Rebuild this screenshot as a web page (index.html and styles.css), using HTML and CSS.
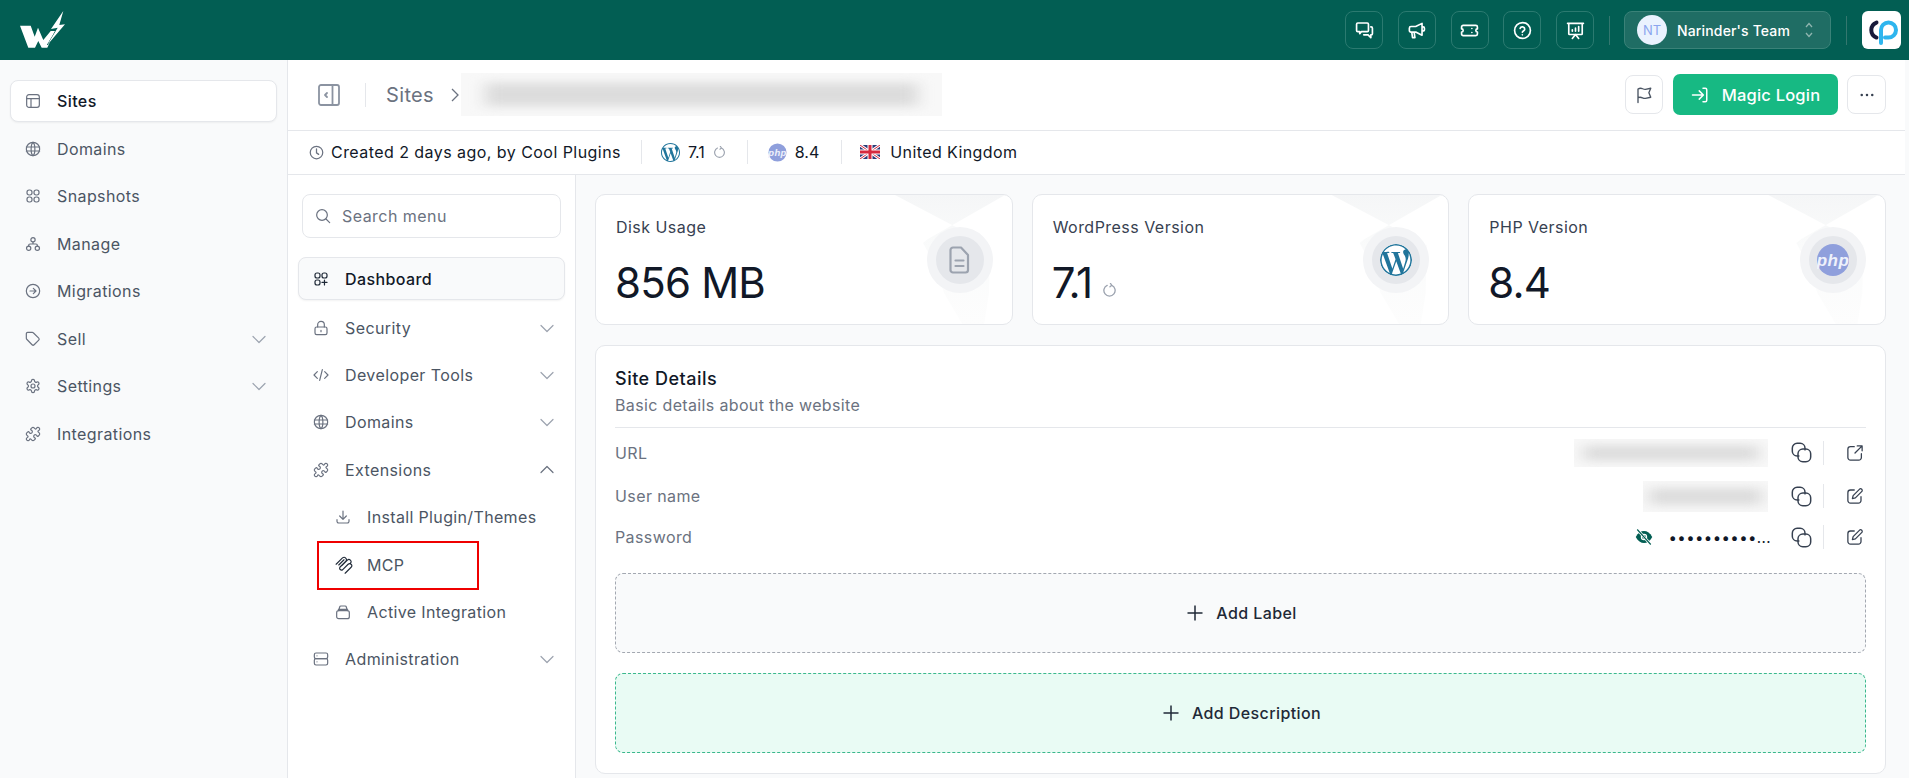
FILE: index.html
```html
<!DOCTYPE html>
<html lang="en">
<head>
<meta charset="utf-8">
<title>Sites</title>
<link rel="stylesheet" href="styles.css">
</head>
<body>
<svg class="defs" xmlns="http://www.w3.org/2000/svg">
  <symbol id="i-layout" viewBox="0 0 24 24"><rect x="2.500" y="2.500" width="19" height="19" rx="3.500"/><path d="M2.500 8.500h19M9 8.500v13"/></symbol>
  <symbol id="i-globe" viewBox="0 0 24 24"><circle cx="12" cy="12" r="10"/><path d="M2 9h20M2 15h20M12 2c3.600 3 3.900 17 0 20M12 2c-3.600 3-3.900 17 0 20"/></symbol>
  <symbol id="i-grid" viewBox="0 0 24 24"><rect x="3" y="3" width="7.500" height="7.500" rx="3.200"/><rect x="13.500" y="3" width="7.500" height="7.500" rx="3.200"/><rect x="3" y="13.500" width="7.500" height="7.500" rx="3.200"/><rect x="13.500" y="13.500" width="7.500" height="7.500" rx="3.200"/></symbol>
  <symbol id="i-tree" viewBox="0 0 24 24"><circle cx="12" cy="5.500" r="3.200"/><circle cx="5.500" cy="18.500" r="3.200"/><circle cx="18.500" cy="18.500" r="3.200"/><path d="M12 8.700V12M5.500 15.300V14a2 2 0 0 1 2-2h9a2 2 0 0 1 2 2v1.300"/></symbol>
  <symbol id="i-migrate" viewBox="0 0 24 24"><circle cx="12" cy="12" r="10"/><path d="M7.500 12h9M12.500 8l4 4-4 4"/></symbol>
  <symbol id="i-tag" viewBox="0 0 24 24"><path d="M11 2H4a2 2 0 0 0-2 2v7a2 2 0 0 0 .6 1.400l8 8.200a2.200 2.200 0 0 0 3.100 0l6.900-6.900a2.200 2.200 0 0 0 0-3.100l-8.200-8A2 2 0 0 0 11 2z"/></symbol>
  <symbol id="i-gear" viewBox="0 0 24 24"><path d="M12.220 2h-.44a2 2 0 0 0-2 2v.18a2 2 0 0 1-1 1.730l-.43.25a2 2 0 0 1-2 0l-.15-.08a2 2 0 0 0-2.730.73l-.22.38a2 2 0 0 0 .73 2.730l.15.1a2 2 0 0 1 1 1.720v.51a2 2 0 0 1-1 1.740l-.15.09a2 2 0 0 0-.73 2.730l.22.38a2 2 0 0 0 2.730.73l.15-.08a2 2 0 0 1 2 0l.43.25a2 2 0 0 1 1 1.730V20a2 2 0 0 0 2 2h.44a2 2 0 0 0 2-2v-.18a2 2 0 0 1 1-1.730l.43-.25a2 2 0 0 1 2 0l.15.08a2 2 0 0 0 2.730-.73l.22-.39a2 2 0 0 0-.73-2.730l-.15-.08a2 2 0 0 1-1-1.740v-.5a2 2 0 0 1 1-1.740l.15-.09a2 2 0 0 0 .73-2.730l-.22-.38a2 2 0 0 0-2.730-.73l-.15.08a2 2 0 0 1-2 0l-.43-.25a2 2 0 0 1-1-1.730V4a2 2 0 0 0-2-2z"/><circle cx="12" cy="12" r="3"/></symbol>
  <symbol id="i-puzzle" viewBox="0 0 24 24"><path d="M19.439 7.850c-.049.322.059.648.289.878l1.568 1.568c.47.47.706 1.087.706 1.704s-.235 1.233-.706 1.704l-1.611 1.611a.98.98 0 0 1-.837.276c-.47-.07-.802-.48-.968-.925a2.501 2.501 0 1 0-3.214 3.214c.446.166.855.497.925.968a.979.979 0 0 1-.276.837l-1.61 1.610a2.404 2.404 0 0 1-1.705.707 2.402 2.402 0 0 1-1.704-.706l-1.568-1.568a1.026 1.026 0 0 0-.877-.29c-.493.074-.84.504-1.020.968a2.500 2.500 0 1 1-3.237-3.237c.464-.18.894-.527.967-1.020a1.026 1.026 0 0 0-.289-.877l-1.568-1.568A2.402 2.402 0 0 1 1.998 12c0-.617.236-1.234.706-1.704L4.230 8.770c.24-.24.581-.353.917-.303.515.077.877.528 1.073 1.010a2.500 2.500 0 1 0 3.259-3.259c-.482-.196-.933-.558-1.010-1.073-.05-.336.062-.676.303-.917l1.525-1.525A2.402 2.402 0 0 1 12 1.998c.617 0 1.234.236 1.704.706l1.568 1.568c.23.23.556.338.877.29.493-.074.84-.504 1.020-.968a2.500 2.500 0 1 1 3.237 3.237c-.464.18-.894.527-.967 1.020Z"/></symbol>
  <symbol id="i-chev" viewBox="0 0 16 16"><path d="M2 5.500l6 6 6-6"/></symbol>
  <symbol id="i-dash" viewBox="0 0 24 24"><rect x="3" y="3" width="7.500" height="7.500" rx="3"/><rect x="13.500" y="3" width="7.500" height="7.500" rx="3"/><rect x="3" y="13.500" width="7.500" height="7.500" rx="3"/><path d="M17.200 13.500v7.500M13.500 17.200H21"/></symbol>
  <symbol id="i-lock" viewBox="0 0 24 24"><rect x="3" y="10.500" width="18" height="11.500" rx="2.500"/><path d="M7 10.500V7a5 5 0 0 1 10 0v3.500M12 15.500v2"/></symbol>
  <symbol id="i-code" viewBox="0 0 24 24"><path d="M6.500 7L1.500 12l5 5M17.500 7l5 5-5 5M14 4l-4 16"/></symbol>
  <symbol id="i-down" viewBox="0 0 24 24"><path d="M12 3v12M7 10.500l5 5 5-5M3 16v2.500A2.500 2.500 0 0 0 5.500 21h13a2.500 2.500 0 0 0 2.500-2.500V16"/></symbol>
  <symbol id="i-mcp" viewBox="0 0 24 24"><path d="M1.500 11L10 2.500a3.200 3.200 0 0 1 4.500 4.500L6.500 15M5 12l7-7M6.500 15a2.600 2.600 0 0 0 3.500 3.500L17.500 11a2.800 2.800 0 0 1 4 4L13.500 23M9.500 12.500l7-7a2.800 2.800 0 0 1 4 4"/></symbol>
  <symbol id="i-stack" viewBox="0 0 24 24"><rect x="2.500" y="10" width="19" height="12" rx="3"/><path d="M5.500 10L7 4.500A2 2 0 0 1 9 3h6a2 2 0 0 1 2 1.500l1.500 5.500M5 8h14"/></symbol>
  <symbol id="i-server" viewBox="0 0 24 24"><rect x="2" y="3" width="20" height="8.500" rx="2.500"/><rect x="2" y="11.500" width="20" height="9.500" rx="2.500"/><path d="M6 7.200h.01M6 16.200h.01"/></symbol>
  <symbol id="i-plus" viewBox="0 0 16 16"><path d="M8 .5v15M.5 8h15"/></symbol>
  <symbol id="i-copy" viewBox="0 0 24 24"><path d="M9 16H7a5.500 5.500 0 0 1-5.500-5.500V7A5.500 5.500 0 0 1 7 1.500h3.500A5.500 5.500 0 0 1 16 7v2"/><rect x="8" y="8" width="14.500" height="14.500" rx="5.500"/></symbol>
  <symbol id="i-ext" viewBox="0 0 24 24"><path d="M11 3.500H6A3.500 3.500 0 0 0 2.500 7v11A3.500 3.500 0 0 0 6 21.500h11a3.500 3.500 0 0 0 3.500-3.500v-5M12 12L21.500 2.500M15 2.500h6.500V9"/></symbol>
  <symbol id="i-edit" viewBox="0 0 24 24"><path d="M11 4H6a3.500 3.500 0 0 0-3.500 3.500V18A3.500 3.500 0 0 0 6 21.500h10.500A3.500 3.500 0 0 0 20 18v-5"/><path d="M18.500 2.500a2.300 2.300 0 0 1 3 3L12.500 14.500 8.500 15.500l1-4z"/></symbol>
  <symbol id="i-wp" viewBox="0 0 24 24"><path fill="#21759b" d="M21.469 6.825c.84 1.537 1.318 3.300 1.318 5.175 0 3.979-2.156 7.456-5.363 9.325l3.295-9.527c.615-1.540.82-2.771.82-3.864 0-.405-.026-.78-.07-1.110m-7.981.105c.647-.03 1.232-.105 1.232-.105.582-.075.514-.93-.067-.899 0 0-1.755.135-2.880.135-1.064 0-2.850-.15-2.850-.15-.585-.03-.661.855-.075.885 0 0 .54.061 1.125.09l1.680 4.605-2.370 7.080L5.354 6.900c.649-.03 1.234-.1 1.234-.1.585-.075.516-.93-.065-.896 0 0-1.746.138-2.874.138-.2 0-.438-.008-.69-.015C4.911 3.150 8.235 1.215 12 1.215c2.809 0 5.365 1.072 7.286 2.833-.046-.003-.091-.009-.141-.009-1.060 0-1.812.923-1.812 1.914 0 .89.513 1.643 1.060 2.531.411.72.89 1.643.89 2.977 0 .915-.354 1.994-.821 3.479l-1.075 3.585-3.900-11.610.001.014zM12 22.784c-1.059 0-2.081-.153-3.048-.437l3.237-9.406 3.315 9.087c.024.053.05.101.078.149-1.120.393-2.325.609-3.582.609M1.211 12c0-1.564.336-3.050.935-4.390L7.290 21.709C3.694 19.960 1.212 16.271 1.211 12M12 0C5.385 0 0 5.385 0 12s5.385 12 12 12 12-5.385 12-12S18.615 0 12 0"/></symbol>
</svg>

<div class="app">
  <header class="topbar">
    <svg class="logo" viewBox="0 0 45 38" aria-hidden="true"><path d="M0 14.700h10.700l4 11 3.300-9 5.300 12.300 7.400-9H35l-7.700 16.700h-5.600L18.300 30 15 36.700H8.300z" fill="#fff"/><path d="M43.300 0L31 18l6.700-1.300L27.300 34 45 13.300l-5.700.7z" fill="#fff" stroke="#025e53" stroke-width="1" paint-order="stroke"/></svg>
    <div class="top-actions">
      <button class="top-btn"><svg viewBox="0 0 24 24"><path d="M2 4a1.500 1.500 0 0 1 1.500-1.500h12A1.500 1.500 0 0 1 17 4v8a1.500 1.500 0 0 1-1.500 1.500H8L6 16v-2.500H3.500A1.500 1.500 0 0 1 2 12z"/><path d="M20 7.500h.5A1.500 1.500 0 0 1 22 9v7a1.500 1.500 0 0 1-1.500 1.500H20V21l-3.500-3.500H11"/></svg></button>
      <button class="top-btn"><svg viewBox="0 0 24 24"><path d="M3 9a2 2 0 0 1 2-2h6l8-4v15l-8-4H5a2 2 0 0 1-2-2zM6 14l1 7h3l-1-7M19 7.500h1.500a1.500 1.500 0 0 1 1.500 1.500v2a1.500 1.500 0 0 1-1.500 1.500H19"/></svg></button>
      <button class="top-btn"><svg viewBox="0 0 24 24"><path d="M2 7.500a2 2 0 0 1 2-2h16a2 2 0 0 1 2 2V10a2 2 0 0 0 0 4v2.500a2 2 0 0 1-2 2H4a2 2 0 0 1-2-2V14a2 2 0 0 0 0-4zM15 9.500v.01M15 14.500v.01"/></svg></button>
      <button class="top-btn"><svg viewBox="0 0 24 24"><circle cx="12" cy="12" r="10"/><path d="M9 9.300a3 3 0 0 1 5.800 1c0 2-3 2.500-3 4M11.800 17.500h.01"/></svg></button>
      <button class="top-btn"><svg viewBox="0 0 24 24"><path d="M2 3h20M3.500 3v13a1 1 0 0 0 1 1h15a1 1 0 0 0 1-1V3M8 22l4-5 4 5M8 13v-2M12 13V9M16 13V7"/></svg></button>
    </div>
    <span class="top-sep first"></span>
    <button class="team">
      <span class="avatar">NT</span>
      <span class="team-name">Narinder's Team</span>
      <svg class="updown" viewBox="0 0 8 16"><path d="M1 5l3-3.500L7 5M1 11l3 3.500L7 11"/></svg>
    </button>
    <span class="top-sep"></span>
    <span class="cp">
      <svg viewBox="0 0 39 38" aria-hidden="true"><path d="M14.500 11.500a8 8 0 0 0 0 15" fill="none" stroke="#17193a" stroke-width="4" stroke-linecap="round"/><path d="M19 32V19a7.500 7.500 0 1 1 7.500 7.500H23" fill="none" stroke="#2eb5ee" stroke-width="4" stroke-linecap="round"/></svg>
    </span>
  </header>

  <div class="body">
    <nav class="side">
      <a class="side-item active"><svg class="ic"><use href="#i-layout"/></svg>Sites</a>
      <a class="side-item"><svg class="ic"><use href="#i-globe"/></svg>Domains</a>
      <a class="side-item"><svg class="ic"><use href="#i-grid"/></svg>Snapshots</a>
      <a class="side-item"><svg class="ic"><use href="#i-tree"/></svg>Manage</a>
      <a class="side-item"><svg class="ic"><use href="#i-migrate"/></svg>Migrations</a>
      <a class="side-item"><svg class="ic"><use href="#i-tag"/></svg>Sell<svg class="chev"><use href="#i-chev"/></svg></a>
      <a class="side-item"><svg class="ic"><use href="#i-gear"/></svg>Settings<svg class="chev"><use href="#i-chev"/></svg></a>
      <a class="side-item"><svg class="ic"><use href="#i-puzzle"/></svg>Integrations</a>
    </nav>

    <main class="main">
      <div class="head">
        <svg class="collapse" viewBox="0 0 22 22"><rect x="1" y="1" width="20" height="20" rx="2"/><path d="M14.500 1v20M9 9l-2 2 2 2"/></svg>
        <span class="head-sep"></span>
        <span class="crumb">Sites</span>
        <svg class="crumb-chev" viewBox="0 0 8 14"><path d="M1 1l6 6-6 6"/></svg>
        <span class="blur blur-title"><i></i></span>
        <div class="head-actions">
          <button class="square flagbtn"><svg viewBox="0 0 24 24"><path d="M4 22V4c5-3 6 1 10 .500L21 3l-2.500 6 2.500 6-7 1.500c-4 .5-5-3-10-1"/></svg></button>
          <button class="magic"><svg viewBox="0 0 24 24"><path d="M2 12h14M11 6.500l5.500 5.500-5.500 5.500M16 3h3a2 2 0 0 1 2 2v14a2 2 0 0 1-2 2h-3"/></svg>Magic Login</button>
          <button class="square dots"><svg viewBox="0 0 24 24"><circle cx="5" cy="12" r="1.700"/><circle cx="12" cy="12" r="1.700"/><circle cx="19" cy="12" r="1.700"/></svg></button>
        </div>
      </div>

      <div class="meta">
        <svg class="clock" viewBox="0 0 24 24"><circle cx="12" cy="12" r="10"/><path d="M12 6v6.500l3.500 2.500"/></svg>
        <span class="meta-created">Created 2 days ago, by Cool Plugins</span>
        <span class="meta-sep"></span>
        <svg class="wp"><use href="#i-wp"/></svg>
        <span class="meta-val">7.1</span>
        <svg class="refresh" viewBox="0 0 16 16"><path d="M10.500 2.500a6 6 0 1 1-5 0M9 .5l1.500 2-2 1.500"/></svg>
        <span class="meta-sep after-wp"></span>
        <svg class="php-small" viewBox="0 0 20 20"><circle cx="10" cy="10" r="9.500" fill="#8f9fdc"/><text x="10" y="13.500" text-anchor="middle">php</text></svg>
        <span class="meta-val">8.4</span>
        <span class="meta-sep after-php"></span>
        <svg class="flag" viewBox="0 0 20 14"><rect width="20" height="14" fill="#2b3a78"/><path d="M0 0l20 14M20 0L0 14" stroke="#fff" stroke-width="3"/><path d="M0 0l20 14M20 0L0 14" stroke="#d6293e" stroke-width="1"/><path d="M10 0v14M0 7h20" stroke="#fff" stroke-width="5"/><path d="M10 0v14M0 7h20" stroke="#d6293e" stroke-width="3"/></svg>
        <span class="meta-country">United Kingdom</span>
      </div>

      <div class="split">
        <nav class="sub">
          <label class="search">
            <svg viewBox="0 0 24 24"><circle cx="10.500" cy="10.500" r="8"/><path d="M16.500 16.500L22 22"/></svg>
            <input type="text" placeholder="Search menu">
          </label>
          <div class="sub-list">
            <a class="sub-item active"><svg class="ic dark"><use href="#i-dash"/></svg>Dashboard</a>
            <a class="sub-item"><svg class="ic"><use href="#i-lock"/></svg>Security<svg class="chev"><use href="#i-chev"/></svg></a>
            <a class="sub-item"><svg class="ic"><use href="#i-code"/></svg>Developer Tools<svg class="chev"><use href="#i-chev"/></svg></a>
            <a class="sub-item"><svg class="ic"><use href="#i-globe"/></svg>Domains<svg class="chev"><use href="#i-chev"/></svg></a>
            <a class="sub-item"><svg class="ic"><use href="#i-puzzle"/></svg>Extensions<svg class="chev up"><use href="#i-chev"/></svg></a>
            <a class="sub-item child"><svg class="ic"><use href="#i-down"/></svg>Install Plugin/Themes</a>
            <a class="sub-item child marked"><svg class="ic dark mcp"><use href="#i-mcp"/></svg>MCP<span class="redbox"></span></a>
            <a class="sub-item child"><svg class="ic"><use href="#i-stack"/></svg>Active Integration</a>
            <a class="sub-item"><svg class="ic"><use href="#i-server"/></svg>Administration<svg class="chev"><use href="#i-chev"/></svg></a>
          </div>
        </nav>

        <section class="content">
          <div class="cards">
            <article class="card">
              <span class="deco"></span>
              <div class="card-label">Disk Usage</div>
              <div class="card-value">856 MB</div>
              <span class="ring"><span class="ring-in"><svg class="file" viewBox="0 0 20 28"><path d="M3.500 1.500h8L18.500 9v15a2.500 2.500 0 0 1-2.500 2.500H3.500A2.500 2.500 0 0 1 1 24V4a2.500 2.500 0 0 1 2.500-2.500zM6 14.500h8M6 20h8"/></svg></span></span>
            </article>
            <article class="card">
              <span class="deco"></span>
              <div class="card-label">WordPress Version</div>
              <div class="card-value"><span class="num"><span class="kern">7</span>.1</span><svg class="refresh big" viewBox="0 0 16 16"><path d="M10.500 2.500a6 6 0 1 1-5 0M9 .5l1.500 2-2 1.500"/></svg></div>
              <span class="ring"><span class="ring-in"><svg class="wp big"><use href="#i-wp"/></svg></span></span>
            </article>
            <article class="card">
              <span class="deco"></span>
              <div class="card-label">PHP Version</div>
              <div class="card-value">8.4</div>
              <span class="ring"><span class="ring-in"><svg class="php-big" viewBox="0 0 32 32"><circle cx="16" cy="16" r="16" fill="#8f9fdc"/><text x="16" y="21.500" text-anchor="middle">php</text></svg></span></span>
            </article>
          </div>

          <article class="details">
            <h2>Site Details</h2>
            <p>Basic details about the website</p>
            <div class="rows">
              <div class="row r1">
                <span class="row-label">URL</span>
                <span class="blur blur-url"><i></i></span>
                <svg class="act copy"><use href="#i-copy"/></svg><span class="act-sep"></span><svg class="act ext"><use href="#i-ext"/></svg>
              </div>
              <div class="row r2">
                <span class="row-label">User name</span>
                <span class="blur blur-user"><i></i></span>
                <svg class="act copy"><use href="#i-copy"/></svg><span class="act-sep"></span><svg class="act edit"><use href="#i-edit"/></svg>
              </div>
              <div class="row r3">
                <span class="row-label">Password</span>
                <svg class="eye" viewBox="0 0 24 24"><path d="M1 12c3-5.500 6.800-8 11-8s8 2.500 11 8c-3 5.500-6.800 8-11 8s-8-2.500-11-8z" fill="#025e53"/><circle cx="12" cy="12" r="3.500" fill="none" stroke="#fff" stroke-width="1.500"/><path d="M3 2l18 20" stroke="#fff" stroke-width="3.500"/><path d="M3 2l18 20" stroke="#025e53" stroke-width="1.500"/></svg>
                <span class="pass">••••••••••...</span>
                <svg class="act copy"><use href="#i-copy"/></svg><span class="act-sep"></span><svg class="act edit"><use href="#i-edit"/></svg>
              </div>
            </div>
            <button class="add"><svg class="plus"><use href="#i-plus"/></svg>Add Label</button>
            <button class="add green"><svg class="plus"><use href="#i-plus"/></svg>Add Description</button>
          </article>
        </section>
      </div>
    </main>
    <div class="rail"></div>
  </div>
</div>
</body>
</html>
```

FILE: styles.css
```css
* { box-sizing: border-box; }
html, body { margin: 0; height: 100%; }
body { font-family: Inter, "Liberation Sans", sans-serif; font-size: 16px; letter-spacing: .4px; color: #111827; background: #fff; overflow: hidden; }
button { font-family: inherit; cursor: pointer; }
.defs { display: none; }
.app { height: 778px; display: flex; flex-direction: column; }

/* top bar */
.topbar { height: 60px; flex: none; background: #025e53; display: flex; align-items: center; padding: 0 8px 0 20px; }
.logo { width: 45px; height: 38px; margin-top: -1px; }
.top-actions { margin-left: auto; display: flex; gap: 14.750px; }
.top-btn { width: 38px; height: 38px; padding: 0; border: 1px solid #2b7a70; border-radius: 8px; background: transparent; display: flex; align-items: center; justify-content: center; }
.top-btn svg { width: 19px; height: 19px; fill: none; stroke: #fff; stroke-width: 2.100; stroke-linecap: round; stroke-linejoin: round; }
.top-sep { width: 1px; height: 29px; background: #34776f; margin: 0 15px; }
.top-sep.first { margin: 0 14px 0 15px; }
.team { width: 207px; height: 38px; border: 1px solid #3a8278; border-radius: 8px; background: #1f6d64; color: #fff; display: flex; align-items: center; padding: 0 12px; }
.avatar { width: 30px; height: 30px; border-radius: 50%; background: #eaf2fe; color: #8aa5ee; font-size: 13px; display: flex; align-items: center; justify-content: center; flex: none; }
.team-name { margin-left: 10px; font-size: 14px; font-weight: 500; letter-spacing: .15px; }
.updown { width: 8px; height: 16px; margin-left: 15px; fill: none; stroke: #8fb5af; stroke-width: 1.300; }
.cp { width: 39px; height: 38px; border-radius: 6px; background: #fff; display: block; }
.cp svg { width: 39px; height: 38px; display: block; }

/* layout */
.body { flex: 1; min-height: 0; display: flex; }
.side { width: 288px; flex: none; background: #f9fafb; border-right: 1px solid #e5e7eb; padding: 20px 10px 0; display: flex; flex-direction: column; gap: 5.570px; }
.main { flex: 1; min-width: 0; display: flex; flex-direction: column; }
.rail { width: 4px; flex: none; background: #f9fafb; }

.ic { width: 16px; height: 16px; flex: none; fill: none; stroke: #6b7280; stroke-width: 1.800; stroke-linecap: round; stroke-linejoin: round; }
.ic.dark { stroke: #1f2937; }
.chev { width: 16px; height: 16px; flex: none; margin-left: auto; fill: none; stroke: #9ca3af; stroke-width: 1.200; stroke-linecap: round; stroke-linejoin: round; }
.chev.up { transform: rotate(180deg); stroke: #6b7280; }

.side-item { height: 42px; display: flex; align-items: center; gap: 16px; padding: 0 9px 0 14px; color: #4b5563; border: 1px solid transparent; border-radius: 8px; }
.side-item.active { background: #fff; border-color: #e5e7eb; color: #111827; font-weight: 500; box-shadow: 0 1px 2px rgba(0,0,0,.05); }

/* head */
.head { height: 71px; flex: none; border-bottom: 1px solid #e5e7eb; display: flex; align-items: center; padding: 0 19px 1px 30px; }
.collapse { width: 22px; height: 22px; flex: none; fill: none; stroke: #8b93a1; stroke-width: 1.800; stroke-linejoin: round; stroke-linecap: round; }
.head-sep { width: 1px; height: 24px; background: #e5e7eb; margin: 0 20px 0 25px; }
.crumb { font-size: 20px; color: #6b7280; letter-spacing: .35px; }
.crumb-chev { width: 8px; height: 14px; margin-left: 17px; fill: none; stroke: #6b7280; stroke-width: 1.300; }
.blur { display: block; overflow: hidden; background: #f8f8f8; flex: none; position: relative; }
.blur i { display: block; height: 100%; background: #dcdcdc; filter: blur(9px); transform: scale(.9, .55); }
.blur-title { width: 481px; height: 43px; margin-left: 2px; }
.head-actions { margin-left: auto; display: flex; align-items: center; gap: 10px; }
.square { width: 39px; height: 39px; padding: 0; border: 1px solid #e5e7eb; border-radius: 8px; background: #fff; display: flex; align-items: center; justify-content: center; }
.square.flagbtn { width: 38px; }
.square svg { width: 18px; height: 18px; fill: none; stroke: #4b5563; stroke-width: 1.800; stroke-linejoin: round; stroke-linecap: round; }
.square.dots svg { fill: #374151; stroke: none; }
.magic { width: 165px; height: 41px; border: 0; border-radius: 7px; background: #17b983; color: #fff; font-size: 16.500px; font-weight: 500; letter-spacing: .2px; display: flex; align-items: center; justify-content: center; gap: 13px; padding: 0; margin-right: -1px; }
.magic svg { width: 18px; height: 18px; fill: none; stroke: #fff; stroke-width: 2; stroke-linecap: round; stroke-linejoin: round; }

/* meta */
.meta { height: 44px; flex: none; border-bottom: 1px solid #e5e7eb; display: flex; align-items: center; padding: 0 0 1px 21px; color: #111827; }
.clock { width: 15px; height: 15px; flex: none; fill: none; stroke: #6b7280; stroke-width: 2; stroke-linecap: round; }
.meta-created { margin-left: 7px; letter-spacing: .45px; }
.meta-sep { width: 1px; height: 24px; background: #e5e7eb; margin: 0 19px 0 20px; }
.meta-sep.after-wp { margin: 0 20px 0 21px; }
.meta-sep.after-php { margin: 0 18px 0 22px; }
.wp { width: 19px; height: 19px; flex: none; }
.meta-val { margin-left: 8px; letter-spacing: 0; }
.refresh { width: 13px; height: 13px; margin-left: 8px; flex: none; fill: none; stroke: #9ca3af; stroke-width: 1.400; stroke-linecap: round; stroke-linejoin: round; }
.php-small { width: 19px; height: 19px; flex: none; }
.php-small text { font: italic 700 10px "Liberation Sans", sans-serif; fill: #eef1fb; }
.flag { width: 20px; height: 14px; flex: none; }
.meta-country { margin-left: 10px; }

/* split */
.split { flex: 1; min-height: 0; display: flex; }
.sub { width: 288px; flex: none; border-right: 1px solid #e5e7eb; padding: 19px 10px 0; }
.search { height: 44px; margin: 0 4px 0 4px; border: 1px solid #e5e7eb; border-radius: 8px; display: flex; align-items: center; padding: 0 12px; gap: 11px; background: #fff; }
.search svg { width: 16px; height: 16px; flex: none; fill: none; stroke: #6b7280; stroke-width: 1.800; stroke-linecap: round; }
.search input { border: 0; outline: 0; padding: 0; flex: 1; min-width: 0; font: 16px Inter, sans-serif; letter-spacing: .45px; color: #111827; background: transparent; }
.search input::placeholder { color: #6b7280; opacity: 1; }
.sub-list { margin-top: 20px; display: flex; flex-direction: column; gap: 5.400px; width: 267px; }
.sub-item { height: 42px; display: flex; align-items: center; gap: 16px; padding: 0 9px 0 14px; color: #4b5563; border: 1px solid transparent; border-radius: 8px; }
.sub-item.active { background: #f9fafb; border-color: #e5e7eb; color: #111827; font-weight: 500; box-shadow: 0 1px 2px rgba(0,0,0,.05); height: 43px; margin-top: -1px; margin-bottom: 1.200px; }
.sub-item.child { padding-left: 36px; gap: 16px; letter-spacing: .35px; }
.marked { position: relative; }
.redbox { position: absolute; left: 18px; top: -4px; width: 162px; height: 49px; border: 2px solid #ef0000; }

/* content */
.content { flex: 1; min-width: 0; background: #f9fafb; padding: 19px 19px 0 19px; }
.cards { display: grid; grid-template-columns: repeat(3, 1fr); gap: 19px; }
.card { height: 131px; position: relative; overflow: hidden; background: #fff; border: 1px solid #e5e7eb; border-radius: 10px; padding: 21px 20px; }
.card-label { font-size: 16px; line-height: 22px; letter-spacing: .47px; color: #374151; }
.card-value { margin: 20px 0 0 -1px; font-size: 42px; line-height: 50px; letter-spacing: -.8px; color: #111827; display: flex; align-items: center; }
.kern { letter-spacing: -7px; }
.deco { position: absolute; top: 0; left: 299px; width: 117px; height: 130px; background: linear-gradient(180deg, #f5f6f7 0%, #fafbfb 40%, #fdfdfd 100%); clip-path: polygon(0 0, 110px 0, 33px 44px, 28px 48px, 40px 70px, 49px 98px, 68px 130px, 89px 130px, 94px 98px, 95px 50px); }
.ring { position: absolute; right: 19px; top: 32px; width: 66px; height: 66px; border-radius: 50%; background: #f3f4f6; display: flex; align-items: center; justify-content: center; }
.ring-in { width: 48px; height: 48px; border-radius: 50%; background: #e5e7eb; display: flex; align-items: center; justify-content: center; }
.file { width: 21px; height: 28px; fill: none; stroke: #9ca3af; stroke-width: 2.200; stroke-linecap: round; stroke-linejoin: round; }
.wp.big { width: 32px; height: 32px; background: #fff; border-radius: 50%; }
.refresh.big { margin: 14px 0 0 10px; width: 15px; height: 15px; }
.php-big { width: 32px; height: 32px; }
.php-big text { font: italic 700 17px "Liberation Sans", sans-serif; fill: #eef1fb; }

/* details */
.details { margin-top: 20px; height: 429px; background: #fff; border: 1px solid #e5e7eb; border-radius: 10px; padding: 20px 19px; }
.details h2 { margin: 0; font-size: 18px; line-height: 26px; font-weight: 500; letter-spacing: .5px; color: #111827; }
.details p { margin: 1px 0 0; line-height: 24px; letter-spacing: .35px; color: #6b7280; }
.rows { margin-top: 10px; border-top: 1px solid #e5e7eb; margin-bottom: 14px; }
.row { display: flex; align-items: center; color: #6b7280; padding-right: 2px; }
.r1 { height: 49px; }
.r2 { height: 38px; }
.r3 { height: 44px; }
.row-label { margin-right: auto; }
.blur-url { width: 194px; height: 28px; }
.blur-user { width: 125px; height: 31px; }
.act { flex: none; fill: none; stroke: #374151; stroke-width: 1.700; stroke-linecap: round; stroke-linejoin: round; }
.copy { width: 21px; height: 21px; margin-left: 23px; }
.act-sep { width: 1px; height: 24px; background: #e5e7eb; margin: 0 22px 0 11px; flex: none; }
.ext, .edit { width: 18px; height: 18px; }
.eye { width: 18px; height: 18px; flex: none; }
.pass { margin-left: 15px; white-space: nowrap; color: #111827; font-size: 15px; letter-spacing: .4px; }
.r3 .copy { margin-left: 20px; }
.add { width: 100%; height: 80px; display: flex; align-items: center; justify-content: center; gap: 13px; border: 1px dashed #a3a8b1; border-radius: 8px; background: #f9fafb; color: #1f2937; font-size: 16px; font-weight: 500; letter-spacing: .4px; padding: 0 0 0 3px; }
.add + .add { margin-top: 20px; }
.add.green { background: #e9fbf4; border-color: #3bb88d; }
.plus { width: 16px; height: 16px; fill: none; stroke: #1f2937; stroke-width: 1.500; }
.mcp { width: 18px; height: 18px; stroke-width: 1.500; margin-right: -2px; }
```
